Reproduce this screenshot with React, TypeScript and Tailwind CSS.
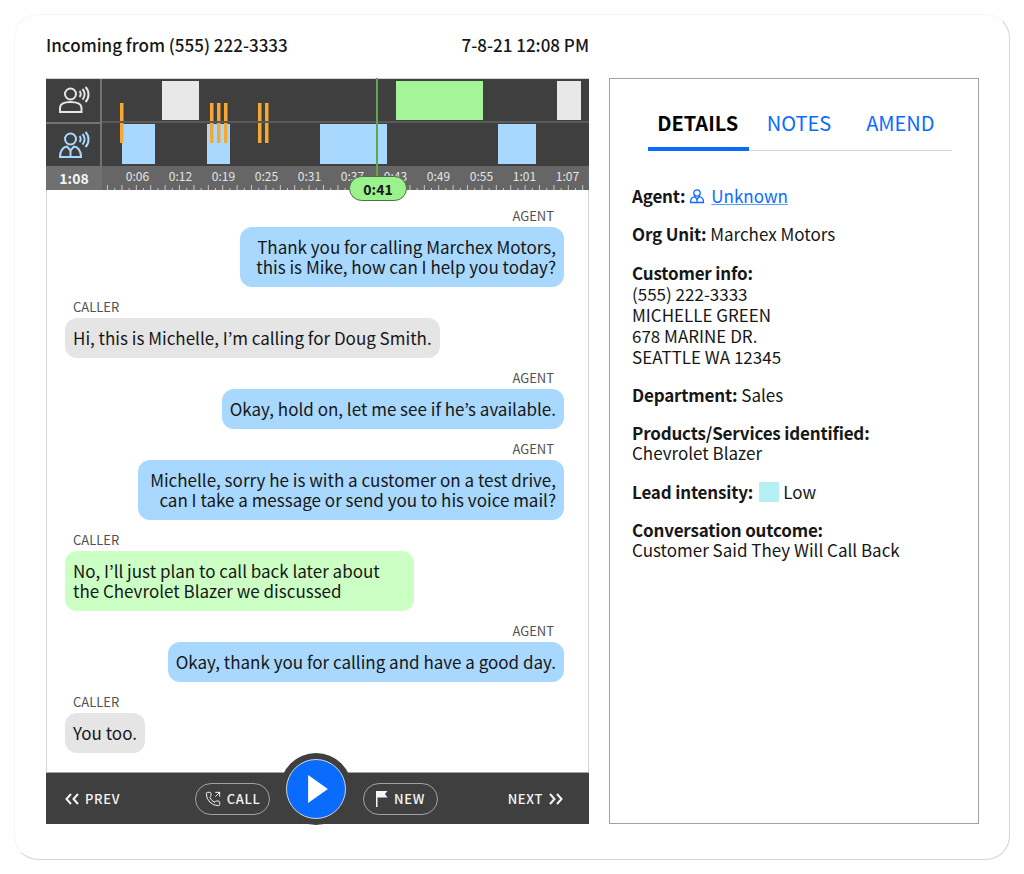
import type { ReactNode } from 'react';
import { PhoneOutgoing } from 'lucide-react';

const font = { fontFamily: '"Noto Sans CJK JP", "Noto Sans", sans-serif' };

const rulerLabels = ['0:06', '0:12', '0:19', '0:25', '0:31', '0:37', '0:43', '0:49', '0:55', '1:01', '1:07'];
const ticks = Array.from({ length: 67 }, (_, i) => i);

// x positions are relative to the track area, which starts 102px into the page
const marks = [18, 108, 115, 122, 156, 163];

const messages = [
  { from: 'AGENT', lines: ['Thank you for calling Marchex Motors,', 'this is Mike, how can I help you today?'], extra: 'pl-4' },
  { from: 'CALLER', lines: ['Hi, this is Michelle, I’m calling for Doug Smith.'] },
  { from: 'AGENT', lines: ['Okay, hold on, let me see if he’s available.'] },
  { from: 'AGENT', lines: ['Michelle, sorry he is with a customer on a test drive,', 'can I take a message or send you to his voice mail?'], extra: 'pl-3' },
  { from: 'CALLER', lines: ['No, I’ll just plan to call back later about', 'the Chevrolet Blazer we discussed'], highlight: true, extra: 'pr-8.5' },
  { from: 'AGENT', lines: ['Okay, thank you for calling and have a good day.'] },
  { from: 'CALLER', lines: ['You too.'], extra: 'pr-2' },
];

const Waves = () => (
  <>
    <path d="M20.500 4.500c1.600 1.600 1.600 4.400 0 6" />
    <path d="M23.500 2.500c2.800 3 2.800 7.500 0 10.500" />
    <path d="M26.500 0.500c4 4 4 11 0 15" />
  </>
);

const CallerIcon = () => (
  <svg viewBox="0 0 32 27" className="h-7 w-8 fill-none stroke-neutral-200" strokeWidth="2">
    <circle cx="11.500" cy="7.500" r="5.500" />
    <path d="M1 25.500v-4c0-4 4.500-6 10.500-6s11 2 11 6v4z" />
    <Waves />
  </svg>
);

const AgentIcon = () => (
  <svg viewBox="0 0 32 27" className="h-7 w-8 fill-none stroke-[#a9d8ff]" strokeWidth="2">
    <circle cx="11.500" cy="7.500" r="5.500" />
    <path d="M1 25.500c0-6 3-10 7-10.500l3.500 4 3.500-4c4 .5 7 4.500 7 10.500z" />
    <path d="M11.500 19v6.500" />
    <Waves />
  </svg>
);

const SmallAgentIcon = () => (
  <svg viewBox="0 0 16 16" className="h-4 w-4 fill-none stroke-[#0a6cff]" strokeWidth="1.300">
    <circle cx="8" cy="5" r="3.200" />
    <path d="M1.500 14.500c0-3.500 2-5.500 4.200-5.800L8 11l2.300-2.300c2.200.3 4.200 2.300 4.200 5.800z" />
    <path d="M8 11v3.500" />
  </svg>
);

const Chevrons = ({ flip }: { flip?: boolean }) => (
  <svg viewBox="0 0 14 12" className={`h-3 w-3.5 fill-none stroke-neutral-100 ${flip ? 'rotate-180' : ''}`} strokeWidth="2">
    <path d="M6 1L1.500 6 6 11M13 1L8.500 6 13 11" />
  </svg>
);

const Label = ({ children }: { children: ReactNode }) => (
  <b className="font-semibold tracking-[-0.01em]">{children}</b>
);

const Timeline = () => (
  <div className="relative">
    <div className="flex h-[88px] border-t border-neutral-300 bg-[#3f3f3f]">
      <div className="flex w-14 flex-col border-r-2 border-neutral-500">
        <div className="flex flex-1 items-center justify-center border-b-2 border-neutral-500 pl-1">
          <CallerIcon />
        </div>
        <div className="flex flex-1 items-center justify-center pl-1">
          <AgentIcon />
        </div>
      </div>
      <svg viewBox="0 0 487 87" className="h-[87px] flex-1">
        <rect x="60" y="2" width="37" height="39" fill="#e8e8e8" />
        <rect x="294" y="2" width="87" height="39" fill="#a3f598" />
        <rect x="455" y="2" width="24" height="39" fill="#e8e8e8" />
        <rect x="20" y="45" width="33" height="40" fill="#a9d8ff" />
        <rect x="105" y="45" width="23" height="40" fill="#a9d8ff" />
        <rect x="218" y="45" width="67" height="40" fill="#a9d8ff" />
        <rect x="396" y="45" width="38" height="40" fill="#a9d8ff" />
        {marks.map((x) => (
          <rect key={x} x={x} y="24" width="3.500" height="40" fill="#f5a833" />
        ))}
        <rect x="0" y="42" width="487" height="2" fill="#5a5a5a" />
      </svg>
    </div>
    <div className="relative flex h-6 bg-[#666666]">
      <div className="flex w-14 items-center justify-center bg-[#707070] text-sm font-bold text-neutral-100">1:08</div>
      <div className="ml-3.5 grid flex-1 grid-cols-11 pb-1.5 text-xs leading-5 text-neutral-200">
        {rulerLabels.map((label) => (
          <span key={label} className="text-center">{label}</span>
        ))}
      </div>
      <svg viewBox="0 0 487 5" className="absolute bottom-0 right-0 h-[5px] w-[487px]">
        {ticks.map((i) => (
          <rect key={i} x={5 + i * 7.2} y={i % 2 ? 3 : 0} width="1" height={i % 2 ? 2 : 5} fill="#c8c8c8" />
        ))}
      </svg>
    </div>
    <div className="absolute left-[330px] top-0 h-[98px] w-0.5 bg-[#5fa552]" />
    <div className="absolute left-[303px] top-[98px] z-10 flex h-[25px] w-[58px] items-center justify-center rounded-full border border-[#4f6f4a] bg-[#9af28c] text-sm font-bold text-neutral-900">
      0:41
    </div>
  </div>
);

const Bubble = ({ message }: { message: (typeof messages)[number] }) => {
  const isAgent = message.from === 'AGENT';
  const bg = message.highlight ? 'bg-[#ccffc4]' : isAgent ? 'bg-[#a9d8ff]' : 'bg-neutral-200';
  return (
    <div className={`flex flex-col ${isAgent ? 'items-end' : 'items-start'}`}>
      <div className={`mb-px text-[13px] leading-5 text-neutral-600 ${isAgent ? 'pr-2.5' : 'pl-2'}`}>{message.from}</div>
      <div className={`whitespace-nowrap rounded-xl px-2 py-2.5 text-[17px] leading-5 text-neutral-900 ${isAgent ? 'text-right' : 'text-left'} ${bg} ${message.extra ?? ''}`}>
        {message.lines.map((line) => (
          <div key={line}>{line}</div>
        ))}
      </div>
    </div>
  );
};

const PillButton = ({ children }: { children: ReactNode }) => (
  <button className="flex h-8 w-[75px] items-center justify-center gap-1.5 rounded-full border border-neutral-400 text-[13px] font-medium tracking-wider text-neutral-100">
    {children}
  </button>
);

const Footer = () => (
  <div className="flex h-[51px] items-center bg-[#3f3f3f] pl-5 pr-5.5 text-[13px] font-medium tracking-wider text-neutral-100">
    <div className="flex flex-1 items-center gap-1.5">
      <div className="-ml-px">
        <Chevrons />
      </div>
      PREV
    </div>
    <div className="flex items-center gap-2.5">
      <PillButton>
        <PhoneOutgoing size={16} strokeWidth={1.5} />
        CALL
      </PillButton>
      <div className="relative mr-px h-8 w-18">
        <div className="absolute -top-7.5 left-0 flex h-18 w-18 items-center justify-center rounded-full bg-[#3f3f3f]">
          <div className="flex h-15 w-15 items-center justify-center rounded-full border border-neutral-300 bg-[#0a6cff]">
            <svg viewBox="0 0 19 27" className="ml-1 h-7 w-5 fill-white">
              <path d="M0 0l19 13.500L0 27z" />
            </svg>
          </div>
        </div>
      </div>
      <PillButton>
        <svg viewBox="0 0 12 16" className="h-4 w-3 fill-neutral-100">
          <path d="M0 0h11.500l-2.500 3 2.500 3.500H1.500V16H0z" />
        </svg>
        NEW
      </PillButton>
    </div>
    <div className="flex flex-1 justify-end">
      <div className="mr-1 flex items-center gap-1.5">
        NEXT
        <Chevrons flip />
      </div>
    </div>
  </div>
);

const Details = () => (
  <div className="mt-8.75 flex flex-col gap-4.5 pl-5.5 text-[17px] leading-5 text-neutral-900">
    <div className="flex items-center">
      <Label>Agent:</Label>
      <span className="ml-1 mr-1.5"><SmallAgentIcon /></span>
      <a className="text-[#0a6cff] underline decoration-blue-400">Unknown</a>
    </div>
    <div><Label>Org Unit:</Label> Marchex Motors</div>
    <div className="leading-[21px]">
      <Label>Customer info:</Label>
      <div>(555) 222-3333</div>
      <div>MICHELLE GREEN</div>
      <div>678 MARINE DR.</div>
      <div>SEATTLE WA 12345</div>
    </div>
    <div><Label>Department:</Label> Sales</div>
    <div>
      <Label>Products/Services identified:</Label>
      <div>Chevrolet Blazer</div>
    </div>
    <div className="mt-px flex items-center">
      <Label>Lead intensity:</Label>
      <span className="ml-1.5 mr-1 h-5 w-5 bg-[#b5f0f5]" />
      Low
    </div>
    <div>
      <Label>Conversation outcome:</Label>
      <div>Customer Said They Will Call Back</div>
    </div>
  </div>
);

export default function App() {
  return (
    <div className="min-h-screen bg-white p-3.5" style={font}>
      <div className="flex h-[846px] flex-col rounded-3xl border border-b-neutral-300 border-l-neutral-100 border-r-neutral-300 border-t-neutral-100 pb-[35px] pl-[31px] pr-7.5 pt-4">
        <div className="mb-[19px] flex w-[543px] justify-between text-[17px] font-medium leading-7 text-neutral-900">
          <span>Incoming from (555) 222-3333</span>
          <span>7-8-21 12:08 PM</span>
        </div>
        <div className="flex min-h-0 flex-1 gap-5">
          <div className="flex w-[543px] flex-col">
            <Timeline />
            <div className="flex flex-1 flex-col gap-2.5 border-x border-b border-neutral-300 border-b-neutral-400 pl-[18px] pr-6 pt-4">
              {messages.map((m, i) => (
                <Bubble key={i} message={m} />
              ))}
            </div>
            <Footer />
          </div>
          <div className="flex-1 border border-neutral-400 pt-7.5">
            <div className="ml-9.5 mr-6.5 grid grid-cols-3 border-b border-neutral-300 text-xl leading-7">
              <div className="-mb-px border-b-4 border-[#0a6cff] pb-2.5 pr-0.5 text-center font-bold text-black">DETAILS</div>
              <div className="pb-2.5 pr-0.5 text-center text-[#0a6cff]">NOTES</div>
              <div className="pb-2.5 pr-0.5 text-center text-[#0a6cff]">AMEND</div>
            </div>
            <Details />
          </div>
        </div>
      </div>
    </div>
  );
}
